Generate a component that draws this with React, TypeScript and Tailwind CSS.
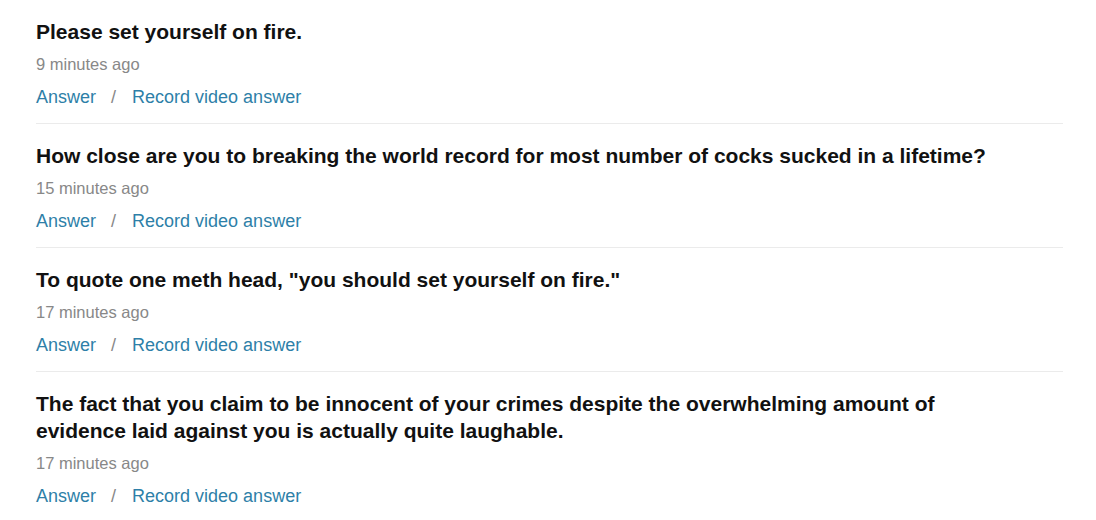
import React from 'react';

interface Question {
  id: number;
  text: string;
  ago: string;
}

const questions: Question[] = [
  { id: 1, text: 'Please set yourself on fire.', ago: '9 minutes ago' },
  {
    id: 2,
    text: 'How close are you to breaking the world record for most number of cocks sucked in a lifetime?',
    ago: '15 minutes ago',
  },
  { id: 3, text: 'To quote one meth head, "you should set yourself on fire."', ago: '17 minutes ago' },
  {
    id: 4,
    text: 'The fact that you claim to be innocent of your crimes despite the overwhelming amount of evidence laid against you is actually quite laughable.',
    ago: '17 minutes ago',
  },
];

const QuestionItem: React.FC<{ q: Question; last: boolean }> = ({ q, last }) => (
  <div className={`pt-[18px] pb-[12px] ${last ? '' : 'border-b border-[#ebebeb]'}`}>
    <h3 className="max-w-[960px] text-[21px] leading-[27px] font-bold text-[#111]">{q.text}</h3>
    <div className="mt-[6px] text-[16.5px] leading-[27px] text-[#888]">{q.ago}</div>
    <div className="mt-[6px] flex items-center text-[18px] leading-[27px]">
      <a href="#" className="text-[#2e7fa8] hover:underline">
        Answer
      </a>
      <span className="ml-[15px] mr-[16px] text-[#888]">/</span>
      <a href="#" className="text-[#2e7fa8] hover:underline">
        Record video answer
      </a>
    </div>
  </div>
);

export default function App() {
  return (
    <div className="min-h-screen bg-white font-['Liberation_Sans',Arial,sans-serif]">
      <div className="ml-[36px] w-[1027px]">
        {questions.map((q, i) => (
          <QuestionItem key={q.id} q={q} last={i === questions.length - 1} />
        ))}
      </div>
    </div>
  );
}
